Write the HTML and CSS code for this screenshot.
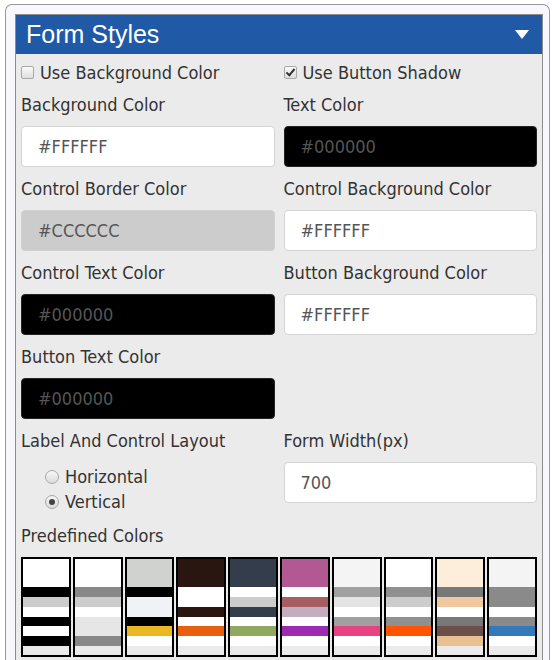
FILE: index.html
```html
<!DOCTYPE html>
<html lang="en">
<head>
<meta charset="UTF-8">
<meta name="viewport" content="width=device-width, initial-scale=1.0">
<title>Form Styles</title>
<link rel="stylesheet" href="styles.css">
</head>
<body>
<div class="frame">
    <div class="panel">
        <div class="panel-head">
            <span class="panel-title">Form Styles</span>
            <span class="caret"></span>
        </div>
        <div class="panel-body">
            <div class="row checks">
                <label class="check"><input type="checkbox"> Use Background Color</label>
                <label class="check"><input type="checkbox" checked> Use Button Shadow</label>
            </div>

            <div class="row">
                <div class="field">
                    <div class="label">Background Color</div>
                    <input class="box" type="text" value="#FFFFFF">
                </div>
                <div class="field">
                    <div class="label">Text Color</div>
                    <input class="box dark" type="text" value="#000000">
                </div>
            </div>

            <div class="row">
                <div class="field">
                    <div class="label">Control Border Color</div>
                    <input class="box grey" type="text" value="#CCCCCC">
                </div>
                <div class="field">
                    <div class="label">Control Background Color</div>
                    <input class="box" type="text" value="#FFFFFF">
                </div>
            </div>

            <div class="row">
                <div class="field">
                    <div class="label">Control Text Color</div>
                    <input class="box dark" type="text" value="#000000">
                </div>
                <div class="field">
                    <div class="label">Button Background Color</div>
                    <input class="box" type="text" value="#FFFFFF">
                </div>
            </div>

            <div class="row">
                <div class="field">
                    <div class="label">Button Text Color</div>
                    <input class="box dark" type="text" value="#000000">
                </div>
            </div>

            <div class="row">
                <div class="field">
                    <div class="label">Label And Control Layout</div>
                    <div class="radios">
                        <label class="radio"><input type="radio" name="layout">Horizontal</label>
                        <label class="radio"><input type="radio" name="layout" checked>Vertical</label>
                    </div>
                </div>
                <div class="field">
                    <div class="label">Form Width(px)</div>
                    <input class="box" type="text" value="700">
                </div>
            </div>

            <div class="label">Predefined Colors</div>
            <div class="swatches">
                <!-- top, then stripes -->
                <div class="swatch">
                    <i style="background:#fff;height:28px"></i><i style="background:#000"></i><i style="background:#ccc"></i><i style="background:#fff"></i><i style="background:#000;height:9px"></i><i style="background:#fff"></i><i style="background:#000"></i>
                </div>
                <div class="swatch">
                    <i style="background:#fff;height:28px"></i><i style="background:#888"></i><i style="background:#ccc"></i><i style="background:#fff"></i><i style="background:#e6e6e6;height:19px"></i><i style="background:#888"></i>
                </div>
                <div class="swatch">
                    <i style="background:#d0d2cf;height:28px"></i><i style="background:#000"></i><i style="background:#f1f2f6;height:20px"></i><i style="background:#000;height:9px"></i><i style="background:#ebb824"></i><i style="background:#fff"></i>
                </div>
                <div class="swatch">
                    <i style="background:#291610;height:28px"></i><i style="background:#fff;height:20px"></i><i style="background:#291610"></i><i style="background:#fff;height:9px"></i><i style="background:#e8600e"></i><i style="background:#fff"></i>
                </div>
                <div class="swatch">
                    <i style="background:#333d4c;height:28px"></i><i style="background:#fff"></i><i style="background:#ccc"></i><i style="background:#333d4c"></i><i style="background:#fff;height:9px"></i><i style="background:#8fa860"></i><i style="background:#fff"></i>
                </div>
                <div class="swatch">
                    <i style="background:#b25893;height:28px"></i><i style="background:#fff"></i><i style="background:#a65e60"></i><i style="background:#c3aec0"></i><i style="background:#fff;height:9px"></i><i style="background:#9c2ab2"></i><i style="background:#fff"></i>
                </div>
                <div class="swatch">
                    <i style="background:#f4f4f4;height:28px"></i><i style="background:#a0a0a0"></i><i style="background:#e4e4e4"></i><i style="background:#fff"></i><i style="background:#a0a0a0;height:9px"></i><i style="background:#e84282"></i><i style="background:#fff"></i>
                </div>
                <div class="swatch">
                    <i style="background:#fff;height:28px"></i><i style="background:#909090"></i><i style="background:#ccc"></i><i style="background:#fff"></i><i style="background:#909090;height:9px"></i><i style="background:#ff5500"></i><i style="background:#fff"></i>
                </div>
                <div class="swatch">
                    <i style="background:#fdeedb;height:28px"></i><i style="background:#787878"></i><i style="background:#efc89f"></i><i style="background:#fff"></i><i style="background:#787878;height:9px"></i><i style="background:#6b4f48"></i><i style="background:#e8c092"></i>
                </div>
                <div class="swatch">
                    <i style="background:#f4f4f4;height:28px"></i><i style="background:#8a8a8a;height:20px"></i><i style="background:#fff"></i><i style="background:#8a8a8a;height:9px"></i><i style="background:#347abb"></i><i style="background:#fff"></i>
                </div>
            </div>
        </div>
    </div>
</div>
</body>
</html>
```
FILE: styles.css
```css
body {
    margin: 0;
    background: #fff;
    font: 18px "DejaVu Sans Condensed", "DejaVu Sans", sans-serif;
    color: #333;
}
.frame {
    box-sizing: border-box;
    height: 656px;
    margin: 4px 4px 0 5px;
    padding: 9px 6px 0 9px;
    border: 1px solid #999;
    border-bottom: 0;
    border-radius: 7px 7px 0 0;
    background: #f8f8fc;
    overflow: hidden;
}
.panel {
    border: 1px solid #8c8c8c;
    background: #ebebeb;
}
.panel-head {
    display: flex;
    align-items: center;
    justify-content: space-between;
    height: 39px;
    padding: 0 13px 0 10px;
    background: #2059a5;
    color: #fff;
}
.panel-title {
    font: 25px "Liberation Sans", Arial, sans-serif;
}
.caret {
    width: 0;
    height: 0;
    border-left: 7.5px solid transparent;
    border-right: 7.5px solid transparent;
    border-top: 9px solid #fff;
}
.panel-body {
    padding: 0 5px 20px;
}
.row {
    display: grid;
    grid-template-columns: 1fr 1fr;
    column-gap: 9px;
}
.checks {
    height: 29px;
    padding-top: 8px;
    box-sizing: border-box;
    line-height: 21px;
}
.check {
    display: flex;
    align-items: center;
}
.check input {
    appearance: none;
    -webkit-appearance: none;
    position: relative;
    width: 13px;
    height: 13px;
    margin: 0 6px 0 0;
    border: 1px solid #a8a8a8;
    border-radius: 2px;
    background: linear-gradient(#fafafa, #dedede);
}
.check input:checked::after {
    content: "";
    position: absolute;
    left: 3px;
    top: 0;
    width: 3px;
    height: 7px;
    border: solid #333;
    border-width: 0 2px 2px 0;
    transform: rotate(40deg);
}
.label {
    padding: 11px 0 10px;
    line-height: 22px;
}
.box {
    display: block;
    box-sizing: border-box;
    width: 100%;
    height: 41px;
    margin: 0;
    padding: 0 16px;
    border: 1px solid #d4d4d4;
    border-radius: 4px;
    background: #fff;
    color: #555;
    font: inherit;
}
.box.dark {
    background: #000;
    border-color: #222;
}
.box.grey {
    background: #ccc;
    border-color: #d0d0d0;
}
.radios {
    padding: 2px 0 0 24px;
}
.radio {
    display: flex;
    align-items: center;
    height: 25px;
}
.radio input {
    appearance: none;
    -webkit-appearance: none;
    position: relative;
    width: 14px;
    height: 14px;
    margin: 0 6px 0 0;
    border: 1px solid #a8a8a8;
    border-radius: 50%;
    background: linear-gradient(#f6f6f6, #dcdcdc);
}
.radio input:checked::after {
    content: "";
    position: absolute;
    left: 3px;
    top: 3px;
    width: 6px;
    height: 6px;
    border-radius: 50%;
    background: #444;
}
.swatches {
    display: grid;
    grid-template-columns: repeat(10, 1fr);
    column-gap: 2px;
}
.swatch {
    height: 96px;
    border: 2px solid #000;
    background: #ebebeb;
}
.swatch i {
    display: block;
    height: 10px;
}
```
